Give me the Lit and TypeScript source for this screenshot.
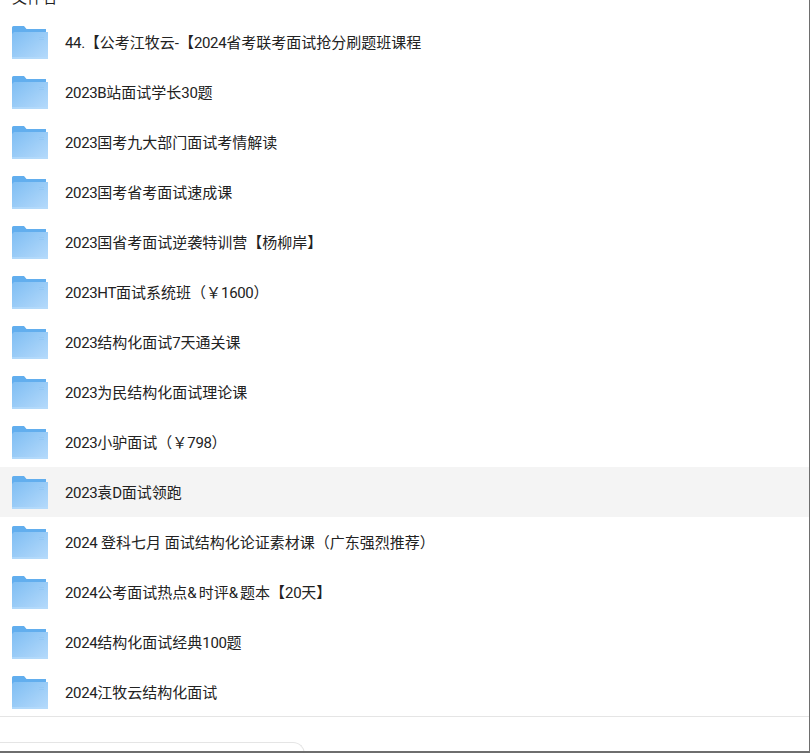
import { LitElement, html, css, svg } from "lit";
import { customElement } from "lit/decorators.js";

const names = [
  "44.【公考江牧云-【2024省考联考面试抢分刷题班课程",
  "2023B站面试学长30题",
  "2023国考九大部门面试考情解读",
  "2023国考省考面试速成课",
  "2023国省考面试逆袭特训营【杨柳岸】",
  "2023HT面试系统班（￥1600）",
  "2023结构化面试7天通关课",
  "2023为民结构化面试理论课",
  "2023小驴面试（￥798）",
  "2023袁D面试领跑",
  "2024 登科七月 面试结构化论证素材课（广东强烈推荐）",
  "2024公考面试热点&时评&题本【20天】",
  "2024结构化面试经典100题",
  "2024江牧云结构化面试",
];

/* Latin runs are set slightly tighter than the CJK text around them; ampersands slightly wider. */
const label = (text: string) =>
  text.split(/([0-9A-Za-z.]+|&)/).map((part, i) =>
    i % 2 ? html`<span class=${part === "&" ? "amp" : "lat"}>${part}</span>` : part
  );

let uid = 0;
const folder = () => {
  const id = `g${uid++}`;
  return svg`<svg class="icon" width="36" height="34" viewBox="0 0 36 34">
    <defs><linearGradient id=${id} x1="0" y1="0" x2="1" y2="1">
      <stop offset="0" stop-color="#7fbef3"/><stop offset="1" stop-color="#b6dafb"/>
    </linearGradient></defs>
    <path d="M0 2.5 Q0 1 1.5 1 H12 L14.5 4 H34 V7 H2 V34 H0 Z" fill="#62aeee"/>
    <path d="M2 7 H36 V34 H0 V9 Z" fill=${`url(#${id})`}/>
    <rect x="0" y="32" width="36" height="2" fill="#b7dbfb" opacity=".7"/>
    <rect x="27" y="12" width="5" height="1" fill="#94c8f5"/>
    <rect x="27" y="14" width="5" height="1" fill="#94c8f5"/>
  </svg>`;
};

@customElement("app-root")
export class AppRoot extends LitElement {
  static styles = css`
    :host { display: block; width: 810px; height: 753px; overflow: hidden; background: #fff; position: relative;
      font-family: "Roboto", "Noto Sans CJK SC", "Liberation Sans", sans-serif; color: #222; }
    .title { height: 17px; overflow: hidden; padding-left: 12px; font-size: 15px; line-height: 15px; }
    .title span { display: block; margin-top: -9px; }
    .row { display: flex; align-items: center; height: 50px; padding-left: 12px; gap: 17px; font-size: 15px; }
    .name { position: relative; top: -1px; }
    .lat { letter-spacing: -0.35px; }
    .amp { letter-spacing: 2px; }
    .row.on { background: #f4f4f4; }
    .icon { flex: none; }
    .rule { height: 1px; background: #e5e5e5; margin-top: -1px; }
    .box { width: 305px; height: 20px; margin-top: 25px; box-sizing: border-box; border: 1px solid #e5e5e5; border-left: 0; border-bottom: 0; border-top-right-radius: 12px; }
    .edge-r { position: absolute; right: 0; top: 0; bottom: 0; width: 1px; background: #6e6e6e; }
    .edge-b { position: absolute; left: 0; right: 0; bottom: 0; height: 2px; background: #6e6e6e; }
  `;
  render() {
    return html`
      <div class="title"><span>文件名</span></div>
      ${names.map((n, i) => html`<div class="row ${i === 9 ? "on" : ""}">${folder()}<span class="name">${label(n)}</span></div>`)}
      <div class="rule"></div>
      <div class="box"></div>
      <div class="edge-r"></div>
      <div class="edge-b"></div>`;
  }
}
